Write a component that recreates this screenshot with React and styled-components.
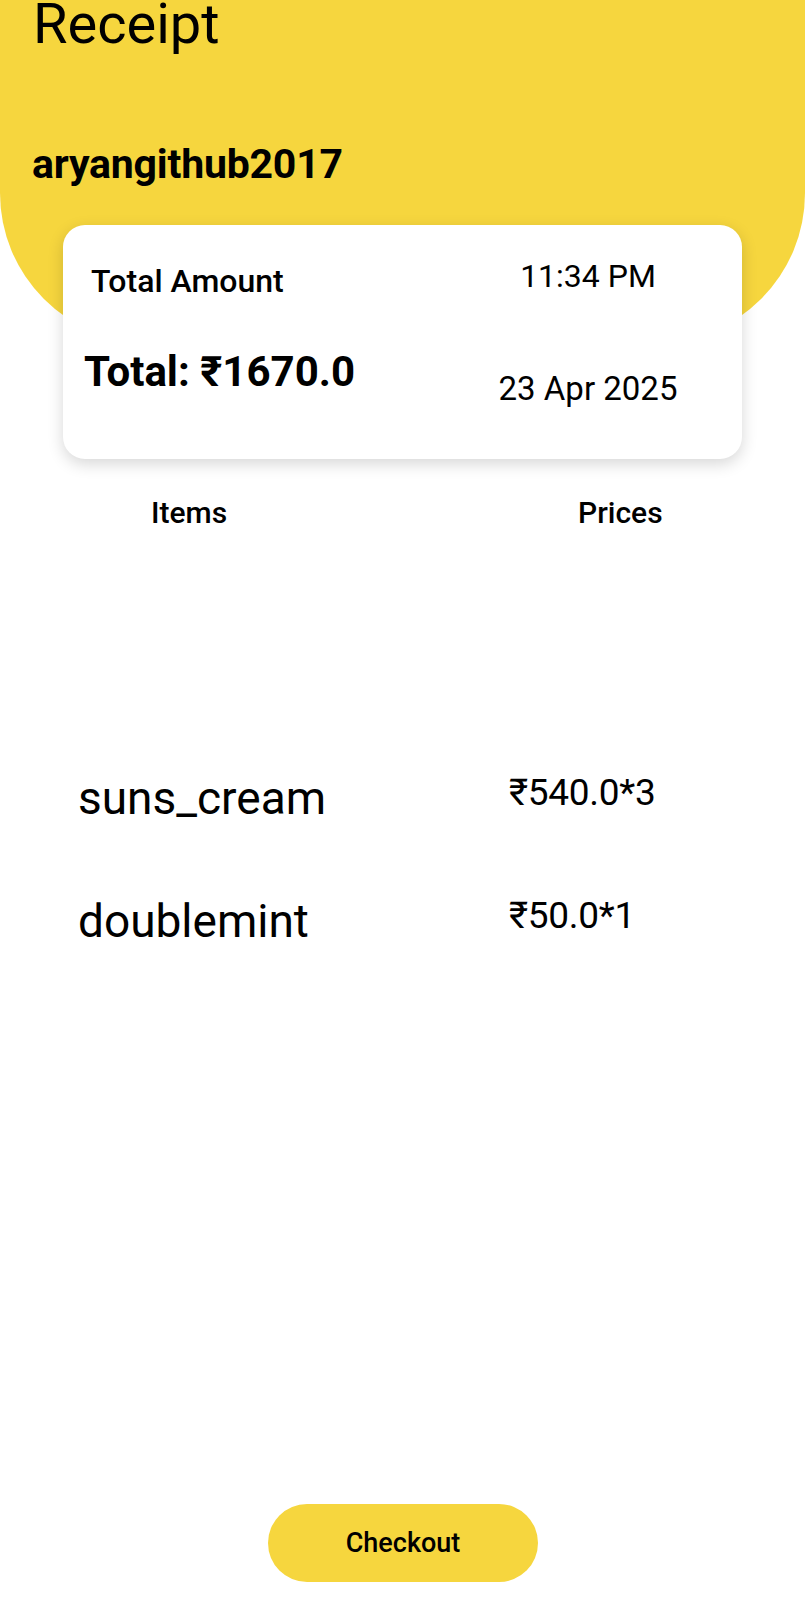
import React from "react";
import styled, { createGlobalStyle } from "styled-components";

const YELLOW = "#F6D63E";
const FONT = `Roboto, "Noto Sans", "DejaVu Sans", sans-serif`;

const GlobalStyle = createGlobalStyle`
  html, body { margin: 0; padding: 0; background: #ffffff; }
  body { font-family: ${FONT}; color: #000; overflow: hidden; }
  * { box-sizing: border-box; }
`;

const Page = styled.div`
  display: flex;
  flex-direction: column;
  min-height: 100vh;
  background: #fff;
`;

const Header = styled.header`
  display: flex;
  flex-direction: column;
  background: ${YELLOW};
  height: 343px;
  padding: 0 0 0 32px;
  border-bottom-left-radius: 150px;
  border-bottom-right-radius: 150px;
`;

const Title = styled.h1`
  margin: -4px 0 0 1px;
  font-size: 56px;
  line-height: 56px;
  font-weight: 400;
`;

const Username = styled.h2`
  margin: 92px 0 0 0;
  font-size: 41px;
  line-height: 41px;
  font-weight: 700;
  letter-spacing: -0.2px;
`;

const Card = styled.section`
  position: relative;
  z-index: 1;
  margin: -118px 63px 0;
  height: 234px;
  background: #fff;
  border-radius: 22px;
  box-shadow: 0 5px 16px rgba(0, 0, 0, 0.16);
  display: grid;
  grid-template-columns: 1fr 220px;
  padding: 0 44px 0 20px;
`;

const CardColumn = styled.div`
  display: flex;
  flex-direction: column;
  align-items: ${(p) => (p.$center ? "center" : "flex-start")};
  padding-top: ${(p) => p.$top}px;
`;

const Label = styled.div`
  margin-left: ${(p) => p.$indent || 0}px;
  margin-top: ${(p) => p.$gap || 0}px;
  font-size: ${(p) => p.$size}px;
  line-height: ${(p) => p.$lh}px;
  font-weight: ${(p) => p.$weight || 400};
  white-space: nowrap;
`;

const Table = styled.div`
  display: flex;
  flex-direction: column;
  padding-left: 78px;
`;

const Row = styled.div`
  display: grid;
  grid-template-columns: 431px 1fr;
  align-items: start;
  margin-top: ${(p) => p.$gap}px;
`;

const HeadCell = styled.div`
  padding-left: ${(p) => p.$indent}px;
  font-size: 30px;
  line-height: 36px;
  font-weight: 500;
`;

const ItemName = styled.div`
  font-size: 46px;
  line-height: 54px;
  font-weight: 400;
`;

const ItemPrice = styled.div`
  font-size: 37px;
  line-height: 44px;
  font-weight: 400;
  letter-spacing: -0.3px;
`;

const Footer = styled.div`
  margin-top: auto;
  display: flex;
  justify-content: center;
  padding: 0 0 18px 0;
`;

const CheckoutButton = styled.button`
  width: 270px;
  height: 78px;
  border: none;
  border-radius: 39px;
  background: ${YELLOW};
  color: #000;
  font-family: ${FONT};
  font-size: 27px;
  font-weight: 500;
  cursor: pointer;
  margin-left: 1px;
`;

const items = [
  { name: "suns_cream", price: "₹540.0*3" },
  { name: "doublemint", price: "₹50.0*1" },
];

export default function App() {
  return (
    <Page>
      <GlobalStyle />
      <Header>
        <Title>Receipt</Title>
        <Username>aryangithub2017</Username>
      </Header>
      <Card>
        <CardColumn $top={36}>
          <Label $indent={8} $size={32} $lh={40} $weight={500}>
            Total Amount
          </Label>
          <Label $indent={1} $gap={46} $size={42} $lh={50} $weight={700}>
            Total: ₹1670.0
          </Label>
        </CardColumn>
        <CardColumn $center $top={31}>
          <Label $size={32} $lh={40}>11:34 PM</Label>
          <Label $gap={73} $size={33} $lh={40}>23 Apr 2025</Label>
        </CardColumn>
      </Card>
      <Table>
        <Row $gap={36}>
          <HeadCell $indent={73}>Items</HeadCell>
          <HeadCell $indent={69}>Prices</HeadCell>
        </Row>
        {items.map((it, i) => (
          <Row key={it.name} $gap={i === 0 ? 240 : 69}>
            <ItemName>{it.name}</ItemName>
            <ItemPrice>{it.price}</ItemPrice>
          </Row>
        ))}
      </Table>
      <Footer>
        <CheckoutButton>Checkout</CheckoutButton>
      </Footer>
    </Page>
  );
}
